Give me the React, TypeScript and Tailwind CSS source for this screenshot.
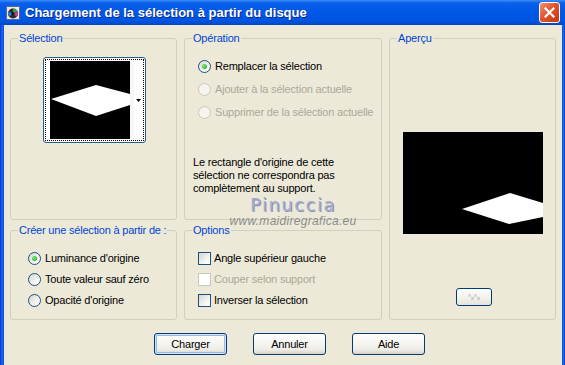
import React from "react";

function Group({
  label,
  className = "",
  children,
}: {
  label: string;
  className?: string;
  children?: React.ReactNode;
}) {
  return (
    <div className={`relative border border-[#D0D0BF] rounded-[3px] ${className}`}>
      <span className="absolute left-[7px] -top-[7px] bg-[#ECE9D8] px-[1px] leading-[13px] text-[#0046D5] whitespace-nowrap">
        {label}
      </span>
      {children}
    </div>
  );
}

function Radio({
  checked = false,
  disabled = false,
  label,
}: {
  checked?: boolean;
  disabled?: boolean;
  label: string;
}) {
  return (
    <div className="flex items-center h-[13px] gap-[4px] whitespace-nowrap">
      <span
        className={`shrink-0 w-[13px] h-[13px] rounded-full border flex items-center justify-center ${
          disabled
            ? "border-[#CAC8BB] bg-[#F5F4EF]"
            : "border-[#1C5180] bg-[linear-gradient(135deg,#D4D4CC_0%,#F4F4F0_60%,#FFFFFF_100%)]"
        }`}
      >
        {checked && (
          <span className="w-[5px] h-[5px] rounded-full bg-[radial-gradient(circle_at_35%_35%,#7CE878_0%,#21A121_100%)]" />
        )}
      </span>
      <span className={`leading-[13px] ${disabled ? "text-[#ACA899]" : "text-black"}`}>{label}</span>
    </div>
  );
}

function Check({ disabled = false, label }: { disabled?: boolean; label: string }) {
  return (
    <div className="flex items-center h-[13px] gap-[3px] whitespace-nowrap">
      <span
        className={`shrink-0 w-[13px] h-[13px] border ${
          disabled
            ? "border-[#CAC8BB] bg-white"
            : "border-[#1C5180] bg-[linear-gradient(135deg,#D4D4CC_0%,#F4F4F0_60%,#FFFFFF_100%)]"
        }`}
      />
      <span className={`leading-[13px] ${disabled ? "text-[#ACA899]" : "text-black"}`}>{label}</span>
    </div>
  );
}

function XpButton({ label, isDefault = false }: { label: string; isDefault?: boolean }) {
  return (
    <button
      className={`w-[73px] h-[22px] rounded-[3px] border border-[#003C74] bg-[linear-gradient(180deg,#FFFFFF_0%,#F6F5F0_45%,#ECEBE6_80%,#D6D0C5_100%)] text-black leading-[20px] text-center ${
        isDefault ? "shadow-[inset_0_0_0_1px_#CEE7FF,inset_0_0_0_2px_#98B8EA]" : ""
      }`}
    >
      {label}
    </button>
  );
}

export default function App() {
  return (
    <div className="w-[565px] h-[365px] flex flex-col overflow-hidden font-['Liberation_Sans',Arial,sans-serif] text-[11px] tracking-[-0.2px]">
      {/* Title bar */}
      <div className="h-[25px] shrink-0 flex items-center bg-[linear-gradient(180deg,#3D8CF7_0%,#0A5FEB_12%,#0058E6_50%,#0054E0_85%,#0046C4_100%)] pl-[6px] pr-[5px]">
        <svg width="14" height="14" viewBox="0 0 14 14" className="shrink-0">
          <rect x="0.5" y="0.5" width="13" height="13" rx="1" fill="#E8E8E8" stroke="#5A6A8A" />
          <circle cx="7" cy="7.5" r="5" fill="#2A2A2A" />
          <path d="M7 7.5 L7 2.5 A5 5 0 0 1 11.5 5.5 Z" fill="#2FA84A" />
          <path d="M7 7.5 L11.5 5.5 A5 5 0 0 1 10.5 11 Z" fill="#C83C8C" />
          <path d="M7 7.5 L3 10.5 A5 5 0 0 1 2.5 5.5 Z" fill="#2E7BD8" />
          <circle cx="7" cy="7.5" r="1.6" fill="#111" />
        </svg>
        <span className="ml-[5px] text-white font-bold text-[13px] tracking-normal [text-shadow:1px_1px_0_#0F2A8A] leading-[25px] whitespace-nowrap">
          Chargement de la sélection à partir du disque
        </span>
        <div className="ml-auto w-[21px] h-[21px] rounded-[3px] border border-white bg-[linear-gradient(135deg,#F0957A_0%,#E2552C_45%,#C8360E_100%)] flex items-center justify-center">
          <svg width="11" height="11" viewBox="0 0 11 11">
            <path d="M1.5 1.5 L9.5 9.5 M9.5 1.5 L1.5 9.5" stroke="white" strokeWidth="2.2" strokeLinecap="square" />
          </svg>
        </div>
      </div>

      {/* Body */}
      <div className="flex-1 flex">
        <div className="w-[4px] bg-[linear-gradient(90deg,#0831D9_0%,#166AEE_50%,#0A4ADB_100%)]" />
        <div className="flex-1 relative bg-[#ECE9D8] flex flex-col pt-[13px] pl-[6px]">
          <div className="grid grid-cols-[167px_198px_167px] grid-rows-[182px_90px] gap-x-[7px] gap-y-[10px]">
            {/* Sélection */}
            <Group label="Sélection">
              <div className="flex justify-center pt-[18px] pl-[2px]">
                <div className="w-[103px] h-[86px] rounded-[3px] border border-[#2C5A8C] bg-white p-[1px]">
                  <div className="w-full h-full border border-dotted border-black flex py-[1px] pl-[4px] pr-[1px]">
                    <div className="w-[80px] h-full bg-black">
                      <svg width="80" height="78" viewBox="0 0 80 78">
                        <polygon points="1,38 46,24 80,33 80,44 46,55" fill="white" />
                      </svg>
                    </div>
                    <div className="flex-1 flex bg-[#F7F7F7]">
                      <div className="flex-1" />
                      <div className="w-[8px] flex items-center justify-center bg-white">
                        <svg width="5" height="3" viewBox="0 0 5 3">
                          <polygon points="0,0 5,0 2.5,3" fill="black" />
                        </svg>
                      </div>
                    </div>
                  </div>
                </div>
              </div>
            </Group>

            {/* Opération */}
            <Group label="Opération">
              <div className="flex flex-col">
                <div className="flex flex-col pt-[21px] pl-[13px] gap-[10px]">
                  <Radio checked label="Remplacer la sélection" />
                  <Radio disabled label="Ajouter à la sélection actuelle" />
                  <Radio disabled label="Supprimer de la sélection actuelle" />
                </div>
                <p className="mt-[37px] pl-[8px] leading-[13px] text-black">
                  Le rectangle d'origine de cette
                  <br />
                  sélection ne correspondra pas
                  <br />
                  complètement au support.
                </p>
              </div>
            </Group>

            {/* Aperçu */}
            <Group label="Aperçu" className="row-span-2">
              <div className="flex flex-col items-center pt-[93px]">
                <div className="w-[140px] h-[102px] bg-black">
                  <svg width="140" height="102" viewBox="0 0 140 102">
                    <polygon points="59,77 107,61 140,71 140,85 106,92" fill="white" />
                  </svg>
                </div>
                <div className="mt-[54px] ml-[3px] w-[36px] h-[18px] rounded-[3px] border border-[#003C74] bg-[linear-gradient(180deg,#FFFFFF_0%,#F4F3EE_50%,#E6E4DA_100%)] flex items-center justify-center">
                  <svg width="14" height="8" viewBox="0 0 14 8">
                    <rect x="1" y="1" width="3" height="3" fill="#D8D8D8" />
                    <rect x="7" y="1" width="3" height="3" fill="#D8D8D8" />
                    <rect x="4" y="4" width="3" height="3" fill="#D0D0D0" />
                    <rect x="10" y="4" width="3" height="3" fill="#D0D0D0" />
                  </svg>
                </div>
              </div>
            </Group>

            {/* Créer une sélection */}
            <Group label="Créer une sélection à partir de :">
              <div className="flex flex-col pt-[21px] pl-[17px] gap-[8px]">
                <Radio checked label="Luminance d'origine" />
                <Radio label="Toute valeur sauf zéro" />
                <Radio label="Opacité d'origine" />
              </div>
            </Group>

            {/* Options */}
            <Group label="Options">
              <div className="flex flex-col pt-[21px] pl-[13px] gap-[8px]">
                <Check label="Angle supérieur gauche" />
                <Check disabled label="Couper selon support" />
                <Check label="Inverser la sélection" />
              </div>
            </Group>
          </div>

          {/* Buttons */}
          <div className="flex gap-[26px] mt-[13px] pl-[144px]">
            <XpButton label="Charger" isDefault />
            <XpButton label="Annuler" />
            <XpButton label="Aide" />
          </div>

          {/* Watermark */}
          <div className="absolute left-[224px] top-[170px] w-[130px] flex flex-col items-center pointer-events-none tracking-normal">
            <span className="text-[18px] leading-[20px] tracking-[1.5px] text-[#A9ADCF] [text-shadow:1px_1px_0_#8A8FB0] font-['DejaVu_Sans',sans-serif]">
              Pinuccia
            </span>
            <span className="text-[12px] leading-[12px] italic text-[#8C8C8C] tracking-[0.3px]">
              www.maidiregrafica.eu
            </span>
          </div>
        </div>
        <div className="w-[3px] bg-[linear-gradient(90deg,#0A4ADB_0%,#166AEE_50%,#0831D9_100%)]" />
      </div>
    </div>
  );
}
